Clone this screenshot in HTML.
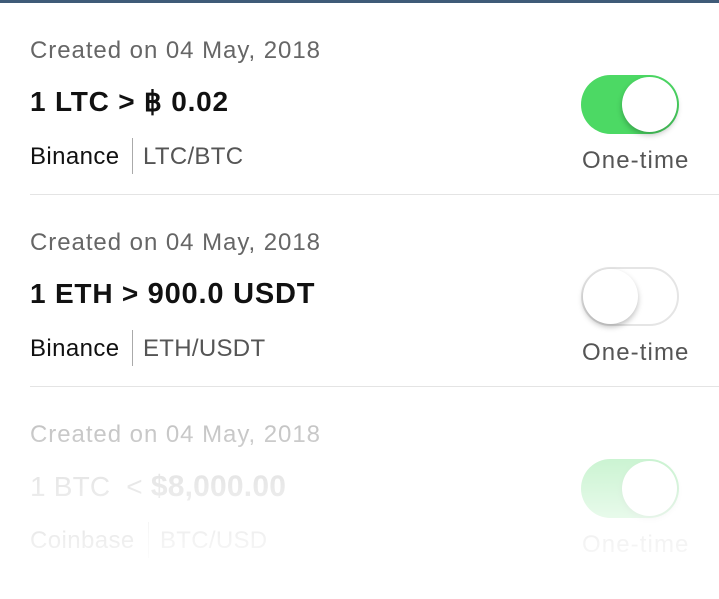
<!DOCTYPE html><html><head><style>
body{margin:0;width:719px;height:599px;background:#fff;overflow:hidden;position:relative;font-family:"Liberation Sans",sans-serif}
.top{position:absolute;left:0;top:0;width:719px;height:3px;background:#3f5b78}
.row{position:absolute;left:0;width:719px;height:192px}
.t{position:absolute;white-space:nowrap;line-height:1}
.c{left:30px;top:39px;font-size:24px;color:#666;letter-spacing:0.95px}
.h{left:30px;top:88px;font-size:28px;font-weight:bold;color:#111;letter-spacing:0.8px}
.b{left:30px;top:145px;font-size:24px;color:#111;letter-spacing:0.4px}
.p{left:143px;top:145px;font-size:24px;color:#555;letter-spacing:0.3px}
.v{position:absolute;left:132px;top:138px;width:1px;height:36px;background:#aaa}
.o{left:582px;top:149px;font-size:24px;color:#555;letter-spacing:1.1px}
.sep{position:absolute;left:30px;top:194px;width:689px;height:1px;background:#e4e4e4}
.tg{position:absolute;left:581px;top:75px;width:98px;height:59px;border-radius:30px;box-sizing:border-box}
.on{background:#4cd964}
.off{background:#fff;border:2px solid #e5e5e5}
.k{position:absolute;top:2px;width:55px;height:55px;border-radius:50%;background:#fff;box-shadow:0 3px 6px rgba(0,0,0,.25)}
.fade{position:absolute;left:0;top:400px;width:719px;height:199px;background:linear-gradient(rgba(255,255,255,.55),rgba(255,255,255,.93) 70%,#fff)}
</style></head><body>
<div class="top"></div>
<div class="row" style="top:0">
<div class="t c">Created on 04 May, 2018</div>
<div class="t h">1 LTC &gt; ฿ 0.02</div>
<div class="t b">Binance</div><div class="v"></div><div class="t p">LTC/BTC</div>
<div class="tg on"><div class="k" style="left:41px"></div></div>
<div class="t o">One-time</div>
</div>
<div class="sep"></div>
<div class="row" style="top:192px">
<div class="t c">Created on 04 May, 2018</div>
<div class="t h">1 ETH &gt; <span style="font-size:29px">900.0 USDT</span></div>
<div class="t b">Binance</div><div class="v"></div><div class="t p">ETH/USDT</div>
<div class="tg off"><div class="k" style="left:0;top:0"></div></div>
<div class="t o">One-time</div>
</div>
<div class="sep" style="top:386px"></div>
<div class="row" style="top:384px">
<div class="t c">Created on 04 May, 2018</div>
<div class="t h" style="font-weight:normal;color:#999;letter-spacing:0.2px">1 BTC &nbsp;&lt; <b style="font-size:30px">$8,000.00</b></div>
<div class="t b">Coinbase</div><div class="v" style="left:148px"></div><div class="t p" style="left:160px">BTC/USD</div>
<div class="tg on"><div class="k" style="left:41px"></div></div>
<div class="t o">One-time</div>
</div>
<div class="fade"></div>
</body></html>
